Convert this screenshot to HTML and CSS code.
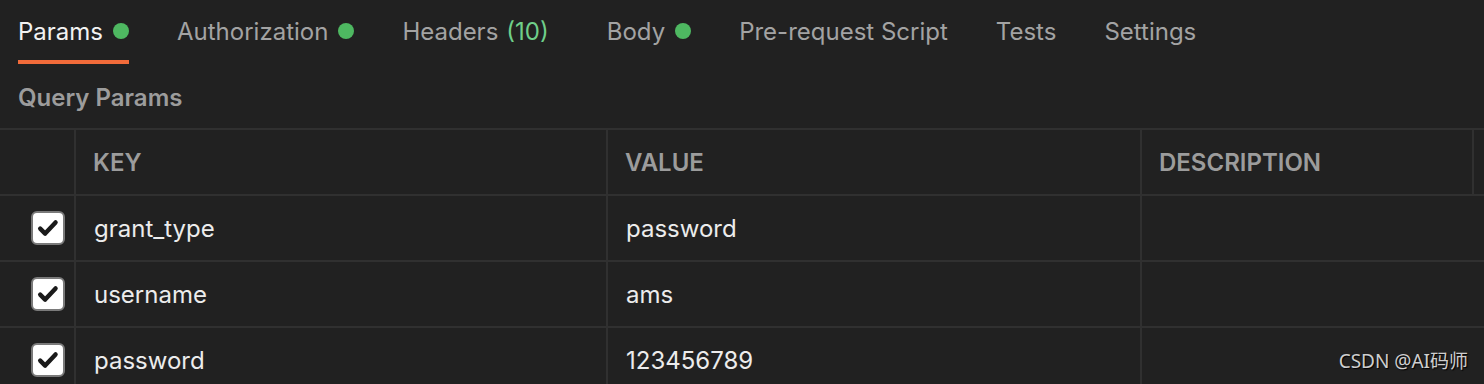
FILE: index.html
```html
<!DOCTYPE html>
<html lang="en">
<head>
    <meta charset="UTF-8">
    <title>Query Params</title>
    <link rel="stylesheet" href="styles.css">
</head>
<body>
    <div class="tabs">
        <div class="tab active">Params <span class="dot"></span></div>
        <div class="tab">Authorization <span class="dot"></span></div>
        <div class="tab tab-headers">Headers <span class="count">(10)</span></div>
        <div class="tab">Body <span class="dot"></span></div>
        <div class="tab">Pre-request Script</div>
        <div class="tab">Tests</div>
        <div class="tab">Settings</div>
    </div>

    <div class="section-title">Query Params</div>

    <div class="params-table">
        <div class="row head">
            <div class="cell check-cell"></div>
            <div class="cell">KEY</div>
            <div class="cell">VALUE</div>
            <div class="cell">DESCRIPTION</div>
            <div class="cell"></div>
        </div>
        <div class="row">
            <div class="cell check-cell"><span class="checkbox"><svg viewBox="0 0 20 20"><path d="M4 10.5l3.8 3.8 8-8.6" /></svg></span></div>
            <div class="cell">grant_type</div>
            <div class="cell">password</div>
            <div class="cell desc"></div>
        </div>
        <div class="row">
            <div class="cell check-cell"><span class="checkbox"><svg viewBox="0 0 20 20"><path d="M4 10.5l3.8 3.8 8-8.6" /></svg></span></div>
            <div class="cell">username</div>
            <div class="cell">ams</div>
            <div class="cell desc"></div>
        </div>
        <div class="row">
            <div class="cell check-cell"><span class="checkbox"><svg viewBox="0 0 20 20"><path d="M4 10.5l3.8 3.8 8-8.6" /></svg></span></div>
            <div class="cell">password</div>
            <div class="cell">123456789</div>
            <div class="cell desc"></div>
        </div>
    </div>

    <div class="watermark">CSDN @AI码师</div>
</body>
</html>
```

FILE: styles.css
```css
body {
    margin: 0;
    background-color: #212121;
    font-family: Inter, "Noto Sans", sans-serif;
    color: #e8e8e8;
    height: 384px;
    overflow: hidden;
    position: relative;
}

.tabs {
    display: flex;
    padding-left: 18px;
    height: 64px;
}
.tab {
    display: flex;
    align-items: center;
    gap: 10px;
    margin-right: 48px;
    font-size: 24px;
    color: #a3a3a3;
    border-bottom: 4px solid transparent;
    box-sizing: border-box;
    padding-top: 2px;
    white-space: nowrap;
}
.tab.active {
    color: #f2f2f2;
    border-bottom-color: #f26b3a;
}
.tab-headers {
    gap: 8px;
    margin-right: 58px;
}
.dot {
    width: 16px;
    height: 16px;
    border-radius: 50%;
    background-color: #4eb861;
}
.count {
    color: #6fcf8a;
}

.section-title {
    height: 64px;
    display: flex;
    align-items: center;
    padding-left: 18px;
    padding-top: 2px;
    box-sizing: border-box;
    font-size: 24px;
    font-weight: 600;
    color: #9c9c9c;
}

.row {
    display: grid;
    grid-template-columns: 74px 532px 534px 332px 1fr;
    border-top: 2px solid #303030;
    height: 66px;
    box-sizing: border-box;
}
.cell {
    display: flex;
    align-items: center;
    padding-left: 18px;
    border-left: 2px solid #303030;
    font-size: 24px;
    color: #ececec;
}
.cell.check-cell {
    border-left: none;
    padding-left: 31px;
}
.cell.desc {
    grid-column: span 2;
}
.head .cell {
    font-weight: 600;
    color: #9c9c9c;
    padding-left: 17px;
}

.checkbox {
    width: 34px;
    height: 34px;
    box-sizing: border-box;
    background-color: #ffffff;
    border: 2px solid #7a7a7a;
    border-radius: 6px;
    display: flex;
    align-items: center;
    justify-content: center;
}
.checkbox svg {
    width: 26px;
    height: 26px;
    fill: none;
    stroke: #1a1a1a;
    stroke-width: 3.4;
    stroke-linecap: round;
    stroke-linejoin: round;
}

.watermark {
    position: absolute;
    right: 16px;
    bottom: 10px;
    font-family: "Noto Sans", "Noto Sans CJK SC", sans-serif;
    font-size: 19px;
    color: #cfcfcf;
    text-shadow: 1px 1px 1px #000;
}
```
